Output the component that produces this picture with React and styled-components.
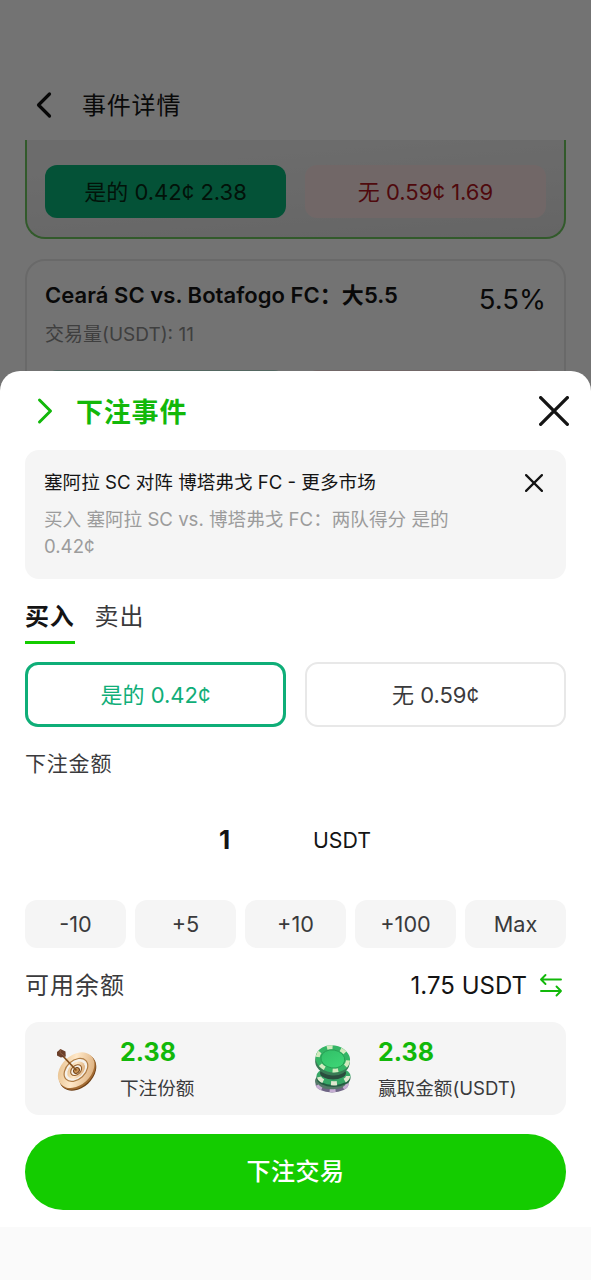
import { useState } from "react"
import styled, { createGlobalStyle, css } from "styled-components"

const theme = {
  green: "#14cc00",
  greenText: "#12b80a",
  teal: "#0fae78",
  ink: "#141414",
  gray: "#3a3a3c",
  muted: "#9c9c9c",
  panel: "#f5f5f5",
}

const steps = ["-10", "+5", "+10", "+100", "Max"]

export default function App() {
  const [tab, setTab] = useState("buy")
  const [side, setSide] = useState("yes")

  return (
    <>
      <GlobalStyle />
      <Screen>
        <TopBar>
          <BackIcon />
          <h1>事件详情</h1>
        </TopBar>
        <MarketList>
          <MarketCard $active>
            <div className="actions">
              <BetButton $kind="picked">是的 0.42¢ 2.38</BetButton>
              <BetButton $kind="no">无 0.59¢ 1.69</BetButton>
            </div>
          </MarketCard>
          <MarketCard>
            <div className="heading">
              <h3>Ceará SC vs. Botafogo FC：大5.5</h3>
              <span>5.5%</span>
            </div>
            <p>交易量(USDT): 11</p>
            <div className="actions">
              <BetButton $kind="yes" />
              <BetButton $kind="no" />
            </div>
          </MarketCard>
        </MarketList>
        <Overlay>
          <Sheet>
            <SheetHeader>
              <ForwardIcon />
              <h2>下注事件</h2>
              <CloseIcon size={30} weight={3.3} />
            </SheetHeader>

            <Selection>
              <div className="top">
                <span>塞阿拉 SC 对阵 博塔弗戈 FC - 更多市场</span>
                <CloseIcon size={18} weight={2.2} />
              </div>
              <p>
                买入 塞阿拉 SC vs. 博塔弗戈 FC：两队得分 是的
                <br />
                0.42¢
              </p>
            </Selection>

            <Tabs>
              <Tab $active={tab === "buy"} onClick={() => setTab("buy")}>
                买入
              </Tab>
              <Tab $active={tab === "sell"} onClick={() => setTab("sell")}>
                卖出
              </Tab>
            </Tabs>

            <Options>
              <Option $active={side === "yes"} onClick={() => setSide("yes")}>
                是的 0.42¢
              </Option>
              <Option $active={side === "no"} onClick={() => setSide("no")}>
                无 0.59¢
              </Option>
            </Options>

            <AmountLabel>下注金额</AmountLabel>
            <Amount>
              <strong>1</strong>
              <span>USDT</span>
            </Amount>

            <Steps>
              {steps.map((step) => (
                <Step key={step}>{step}</Step>
              ))}
            </Steps>

            <Balance>
              <span className="label">可用余额</span>
              <span className="value">1.75 USDT</span>
              <SwapIcon />
            </Balance>

            <Stats>
              <Stat>
                <DartIcon />
                <div>
                  <strong>2.38</strong>
                  <span>下注份额</span>
                </div>
              </Stat>
              <Stat>
                <ChipsIcon />
                <div>
                  <strong>2.38</strong>
                  <span>赢取金额(USDT)</span>
                </div>
              </Stat>
            </Stats>

            <Submit>下注交易</Submit>
          </Sheet>
          <SafeArea />
        </Overlay>
      </Screen>
    </>
  )
}

function BackIcon() {
  return (
    <svg width="16" height="28" viewBox="0 0 16 28" fill="none" stroke="#111" strokeWidth="3.2" strokeLinecap="round" strokeLinejoin="round">
      <path d="M13.5 3 2.5 14l11 11" />
    </svg>
  )
}

function ForwardIcon() {
  return (
    <svg width="16" height="28" viewBox="0 0 16 28" fill="none" stroke={theme.greenText} strokeWidth="3" strokeLinecap="round" strokeLinejoin="round">
      <path d="m2.5 3 11 11-11 11" />
    </svg>
  )
}

function CloseIcon({ size, weight }) {
  const start = weight / 2
  const end = size - start
  return (
    <svg width={size} height={size} fill="none" stroke={theme.ink} strokeWidth={weight} strokeLinecap="round">
      <path d={`M${start} ${start} ${end} ${end}M${end} ${start} ${start} ${end}`} />
    </svg>
  )
}

function SwapIcon() {
  return (
    <svg width="24" height="24" viewBox="0 0 24 24" fill="none" stroke={theme.greenText} strokeWidth="1.9" strokeLinecap="round" strokeLinejoin="round">
      <path d="M22 6.5H2M6.500 2 2 6.500 6.500 11" />
      <path d="M2 18h20M17.500 13.500 22 18l-4.500 4.500" />
    </svg>
  )
}

function DartIcon() {
  return (
    <svg width="50" height="50" viewBox="0 0 50 50" fill="none">
      <defs>
        <linearGradient id="gold" x1="0" y1="0" x2="1" y2="1">
          <stop offset="0" stopColor="#e0b67f" />
          <stop offset=".45" stopColor="#ffe8c8" />
          <stop offset="1" stopColor="#d3a069" />
        </linearGradient>
      </defs>
      <g transform="translate(1.5 -.5) rotate(-43 25 27)">
        <ellipse cx="24.5" cy="29.5" rx="21" ry="15" fill="#6f4016" />
        <ellipse cx="24.8" cy="28.3" rx="21" ry="15" fill="#a56d34" />
        <ellipse cx="25" cy="26.5" rx="20.8" ry="14.8" fill="url(#gold)" />
        <ellipse cx="25" cy="26.2" rx="13.6" ry="9.4" fill="#f5f1ea" stroke="#b07d45" strokeWidth="1.2" />
        <ellipse cx="25" cy="26.5" rx="10.2" ry="7" fill="url(#gold)" />
        <ellipse cx="25" cy="26.5" rx="6.3" ry="4.4" fill="#f5efe6" stroke="#94602c" strokeWidth="1.1" />
        <ellipse cx="25" cy="27" rx="3.2" ry="2.5" fill="#c99457" stroke="#754519" />
      </g>
      <path d="m11 10 15.500 16.500" stroke="#83501e" strokeWidth="1.8" />
      <path d="m7 8 3.500-3 5 2.500.3 5-5 1-3.800-2z" fill="#6b3f2a" />
      <path d="m10.500 5-.5 3.500 5 4" stroke="#8d5d42" />
    </svg>
  )
}

function ChipsIcon() {
  return (
    <svg width="50" height="50" viewBox="0 0 50 50" fill="none">
      <defs>
        <linearGradient id="felt" x1="0" y1="0" x2="1" y2="1">
          <stop offset="0" stopColor="#31bd66" />
          <stop offset="1" stopColor="#3fd978" />
        </linearGradient>
      </defs>
      <ellipse cx="24" cy="40" rx="16.5" ry="8.5" fill="#6f6585" />
      <ellipse cx="24" cy="37" rx="17" ry="8.5" fill="#547a68" />
      <ellipse cx="24" cy="40" rx="15" ry="6.8" stroke="#c6aed3" strokeWidth="3" strokeDasharray="6 8" />
      <ellipse cx="25.5" cy="34" rx="17" ry="9" fill="#235d42" />
      <ellipse cx="25.5" cy="32" rx="17" ry="9" fill="#37a766" />
      <ellipse cx="25.5" cy="32" rx="14.5" ry="7.3" stroke="#dfe8cf" strokeWidth="4.2" strokeDasharray="6 8" />
      <ellipse cx="25" cy="29" rx="13" ry="6.5" fill="#2b4d3e" />
      <g transform="rotate(9 25 17)">
        <ellipse cx="24.5" cy="18" rx="17.3" ry="13.5" fill="#397b55" />
        <ellipse cx="24.5" cy="15" rx="17.3" ry="13.5" fill="#34b565" />
        <ellipse cx="24.5" cy="15" rx="15.2" ry="11.5" stroke="#d3eabf" strokeWidth="4" strokeDasharray="5.5 8.3" />
        <ellipse cx="24.5" cy="15" rx="12" ry="9" fill="url(#felt)" stroke="#249950" strokeWidth=".8" />
      </g>
    </svg>
  )
}

const GlobalStyle = createGlobalStyle`
  * {
    box-sizing: border-box;
  }
  body {
    margin: 0;
    font-family: Inter, "Noto Sans CJK SC", sans-serif;
    color: ${theme.ink};
  }
  h1, h2, h3, p {
    margin: 0;
  }
  button {
    padding: 0;
    border: 0;
    font-family: inherit;
    cursor: pointer;
  }
  svg {
    display: block;
    flex-shrink: 0;
  }
`

const Screen = styled.div`
  position: relative;
  height: 1280px;
  overflow: hidden;
  background: #ffffff;
`

const TopBar = styled.header`
  display: flex;
  align-items: center;
  gap: 30px;
  height: 140px;
  padding: 70px 36px 0;

  h1 {
    padding-top: 2px;
    font-size: 24px;
    font-weight: 400;
    letter-spacing: 0.8px;
    line-height: 36px;
  }
`

const MarketList = styled.div`
  display: flex;
  flex-direction: column;
  gap: 20px;
  height: 300px;
  padding: 0 25px;
  overflow: hidden;
`

const MarketCard = styled.article`
  flex-shrink: 0;
  height: 185px;
  padding: 18px 18px 0;
  border: 2px solid #e9e9e9;
  border-radius: 20px;

  ${({ $active }) =>
    $active &&
    css`
      height: 99px;
      padding-top: 25px;
      border-color: #6fc860;
      border-top: 0;
      border-radius: 0 0 20px 20px;
      background: linear-gradient(175deg, #f0f0f0 20%, #e0e0e0 100%);
    `}

  .heading {
    display: flex;
    justify-content: space-between;
    height: 40px;
    line-height: 34px;

    h3 {
      margin-top: -1px;
      font-size: 22px;
      font-weight: 600;
      letter-spacing: 0.05px;
    }
    span {
      font-size: 27.5px;
      line-height: 41px;
    }
  }

  p {
    height: 51px;
    color: #8c8c8c;
    font-size: 19px;
    line-height: 32px;
  }

  .actions {
    display: flex;
    gap: 19px;
  }
`

const betColors = {
  picked: css`
    background: #0bb67b;
    color: #052b16;
  `,
  yes: css`
    background: #b9e5d7;
    color: ${theme.teal};
  `,
  no: css`
    background: #fbe5e4;
    color: #b01620;
  `,
}

const BetButton = styled.button`
  flex: 1;
  height: 53px;
  padding-bottom: 4px;
  border-radius: 12px;
  font-size: 22px;
  ${({ $kind }) => betColors[$kind]}
`

const Overlay = styled.div`
  position: absolute;
  inset: 0;
  display: flex;
  flex-direction: column;
  justify-content: flex-end;
  background: rgba(0, 0, 0, 0.55);
`

const Sheet = styled.section`
  display: flex;
  flex-direction: column;
  height: 856px;
  padding: 0 25px;
  border-radius: 20px 20px 0 0;
  background: #ffffff;
`

const SafeArea = styled.div`
  height: 53px;
  background: #fafafa;
`

const SheetHeader = styled.div`
  display: flex;
  align-items: center;
  height: 79px;
  margin: 0 -3px 0 12px;

  h2 {
    flex: 1;
    margin-left: 23px;
    color: ${theme.greenText};
    font-size: 27px;
    font-weight: 600;
    letter-spacing: 0.8px;
  }
`

const Selection = styled.div`
  height: 129px;
  padding: 19px 23px 0 19px;
  border-radius: 14px;
  background: ${theme.panel};
  font-size: 18.6px;
  line-height: 27px;

  .top {
    display: flex;
    align-items: center;
    justify-content: space-between;
    height: 27px;
  }
  p {
    margin-top: 10px;
    color: ${theme.muted};
    white-space: nowrap;
  }
`

const Tabs = styled.div`
  display: flex;
  gap: 20px;
  height: 83px;
  padding-top: 18px;
`

const Tab = styled.button`
  height: 47px;
  padding-bottom: 5px;
  border-bottom: 3px solid ${({ $active }) => ($active ? theme.green : "transparent")};
  background: none;
  color: ${({ $active }) => ($active ? theme.ink : theme.gray)};
  font-size: 24px;
  font-weight: ${({ $active }) => ($active ? 700 : 400)};
  letter-spacing: 0.8px;
  line-height: 36px;
`

const Options = styled.div`
  display: flex;
  gap: 19px;
`

const Option = styled.button`
  flex: 1 1 50%;
  height: 65px;
  padding-bottom: 4px;
  border: 2px solid #e8e8e8;
  border-radius: 13px;
  background: #ffffff;
  color: ${theme.gray};
  font-size: 22px;

  ${({ $active }) =>
    $active &&
    css`
      border: 3px solid ${theme.teal};
      color: ${theme.teal};
    `}
`

const AmountLabel = styled.div`
  height: 72px;
  padding-top: 1px;
  color: ${theme.gray};
  font-size: 21px;
  letter-spacing: 0.8px;
  line-height: 72px;
`

const Amount = styled.div`
  display: flex;
  align-items: center;
  height: 101px;
  padding: 0 0 20px 194px;

  strong {
    width: 94px;
    font-size: 26px;
  }
  span {
    font-size: 21.3px;
  }
`

const Steps = styled.div`
  display: flex;
  gap: 9px;
`

const Step = styled.button`
  flex: 1;
  height: 48px;
  border-radius: 12px;
  background: ${theme.panel};
  color: ${theme.gray};
  font-size: 21.7px;
`

const Balance = styled.div`
  display: flex;
  align-items: center;
  height: 74px;
  padding-right: 3px;
  font-size: 24px;

  .label {
    flex: 1;
    padding-bottom: 4px;
    color: ${theme.gray};
    letter-spacing: 1px;
  }
  .value {
    margin-right: 12px;
  }
`

const Stats = styled.div`
  display: flex;
  height: 93px;
  padding-left: 25px;
  border-radius: 14px;
  background: ${theme.panel};
`

const Stat = styled.div`
  display: flex;
  align-items: center;
  gap: 20px;
  width: 258px;

  strong {
    display: block;
    padding-top: 3px;
    color: ${theme.greenText};
    font-size: 25px;
    line-height: 36px;
  }
  span {
    display: block;
    color: ${theme.gray};
    font-size: 18.6px;
    line-height: 36px;
  }
`

const Submit = styled.button`
  height: 76px;
  margin-top: 19px;
  padding-bottom: 5px;
  border-radius: 38px;
  background: ${theme.green};
  color: #ffffff;
  font-size: 24px;
  font-weight: 500;
  letter-spacing: 0.5px;
`
